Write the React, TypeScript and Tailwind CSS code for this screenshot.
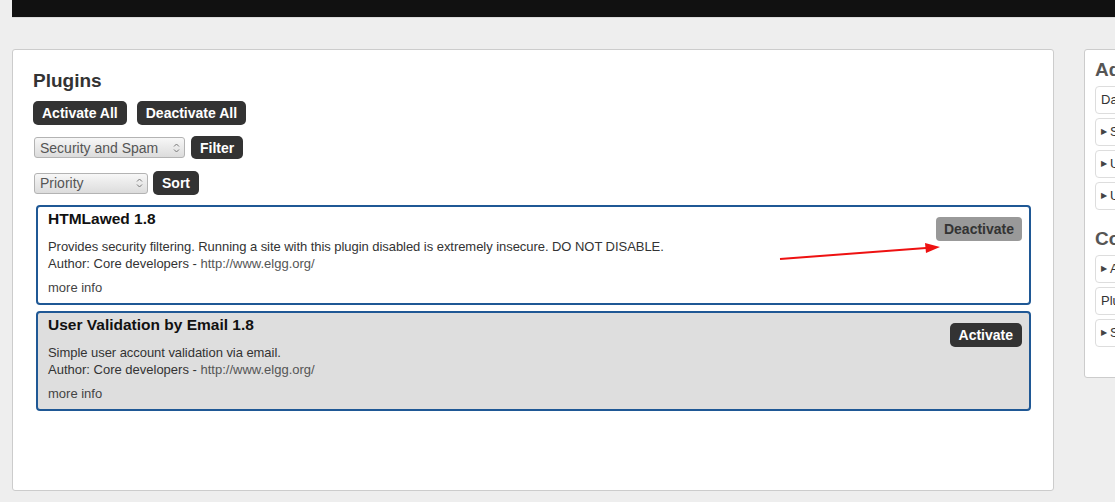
import React from 'react';

interface Plugin {
    name: string;
    description: string;
    active: boolean;
}

const plugins: Plugin[] = [
    {
        name: 'HTMLawed 1.8',
        description: 'Provides security filtering. Running a site with this plugin disabled is extremely insecure. DO NOT DISABLE.',
        active: true,
    },
    {
        name: 'User Validation by Email 1.8',
        description: 'Simple user account validation via email.',
        active: false,
    },
];

const font = { fontFamily: '"Liberation Sans", Arial, sans-serif' };

const DarkButton: React.FC<{ label: string; className?: string }> = ({ label, className }) => (
    <button className={`bg-[#333333] text-white font-bold text-[14px] leading-[16px] rounded-[5px] px-[9px] ${className ?? ''}`}>
        {label}
    </button>
);

const FakeSelect: React.FC<{ value: string; width: string }> = ({ value, width }) => (
    <div className={`${width} h-[21px] flex items-center justify-between border border-[#b3b3b3] rounded-[3px] bg-gradient-to-b from-[#f7f7f7] to-[#dcdcdc] pl-[5px] pr-[4px]`}>
        <span className="text-[14px] text-[#555555] leading-[16px]">{value}</span>
        <svg width="7" height="12" viewBox="0 0 7 12" className="text-[#777777]">
            <path d="M1 4.5 L3.5 2 L6 4.5" fill="none" stroke="currentColor" strokeWidth="1" />
            <path d="M1 7.5 L3.5 10 L6 7.5" fill="none" stroke="currentColor" strokeWidth="1" />
        </svg>
    </div>
);

const SidebarItem: React.FC<{ label: string; arrow?: boolean }> = ({ label, arrow }) => (
    <div className="h-[28px] w-[200px] border border-[#dddddd] rounded-[4px] bg-white flex items-center px-[5px] text-[13px] text-[#333333]">
        {arrow && <span className="text-[8px] mr-[3px] text-[#444444]">▶</span>}
        {label}
    </div>
);

const App: React.FC = () => {
    return (
        <div className="w-[1115px] h-[502px] bg-[#eeeeee] overflow-hidden relative" style={font}>
            {/* Top bar */}
            <div className="ml-[12px] h-[18px] bg-[#111111] border-b border-[#dcdcdc]" />

            <div className="flex items-start gap-[30px] pl-[12px] pt-[31px]">
                {/* Main panel */}
                <div className="w-[1042px] h-[442px] shrink-0 bg-white border border-[#cccccc] rounded-[3px] pt-[20px] pl-[20px] pr-[22px]">
                    <h2 className="text-[19px] leading-[22px] font-bold text-[#333333]">Plugins</h2>

                    <div className="flex gap-[10px] mt-[9px]">
                        <DarkButton label="Activate All" className="h-[24px]" />
                        <DarkButton label="Deactivate All" className="h-[24px]" />
                    </div>

                    <div className="flex items-center gap-[6px] mt-[11px] pl-[1px]">
                        <FakeSelect value="Security and Spam" width="w-[151px]" />
                        <DarkButton label="Filter" className="h-[23px] px-[8px]" />
                    </div>

                    <div className="flex items-center gap-[5px] mt-[12px] pl-[1px]">
                        <FakeSelect value="Priority" width="w-[114px]" />
                        <DarkButton label="Sort" className="h-[24px] px-[7px]" />
                    </div>

                    <div className="mt-[10px] ml-[3px] flex flex-col gap-[6px]">
                        {plugins.map((plugin) => (
                            <div
                                key={plugin.name}
                                className={`flex border-2 border-[#1f5895] rounded-[4px] h-[100px] pl-[10px] pr-[7px] pt-[2px] ${plugin.active ? 'bg-white' : 'bg-[#dedede]'}`}
                            >
                                <div className="flex-1 text-[13px] text-[#333333]">
                                    <div className="text-[15.5px] leading-[19px] font-bold text-[#111111]">{plugin.name}</div>
                                    <p className="mt-[10px] leading-[17px] tracking-[-0.05px]">{plugin.description}</p>
                                    <p className="leading-[17px]">
                                        Author: Core developers - <span className="text-[#555555]">http://www.elgg.org/</span>
                                    </p>
                                    <div className="mt-[7px] leading-[17px] text-[#444444]">more info</div>
                                </div>
                                {plugin.active ? (
                                    <button className="mt-[8px] h-[24px] px-[8px] bg-[#999999] text-[#333333] font-bold text-[14px] rounded-[4px] self-start">
                                        Deactivate
                                    </button>
                                ) : (
                                    <DarkButton label="Activate" className="mt-[8px] h-[24px] px-[7px] self-start" />
                                )}
                            </div>
                        ))}
                    </div>
                </div>

                {/* Sidebar */}
                <div className="w-[222px] h-[329px] shrink-0 bg-white border border-[#cccccc] rounded-[3px] pl-[10px] pt-[9px]">
                    <h3 className="text-[19px] leading-[22px] font-bold text-[#555555]">Administer</h3>
                    <div className="mt-[5px] flex flex-col gap-[4px]">
                        <SidebarItem label="Dashboard" />
                        <SidebarItem label="Statistics" arrow />
                        <SidebarItem label="Users" arrow />
                        <SidebarItem label="Utilities" arrow />
                    </div>
                    <h3 className="mt-[18px] text-[19px] leading-[22px] font-bold text-[#555555]">Configure</h3>
                    <div className="mt-[5px] flex flex-col gap-[4px]">
                        <SidebarItem label="Appearance" arrow />
                        <SidebarItem label="Plugins" />
                        <SidebarItem label="Settings" arrow />
                    </div>
                </div>
            </div>

            {/* Annotation arrow */}
            <svg className="absolute left-0 top-0 pointer-events-none" width="1115" height="502">
                <line x1="780" y1="259" x2="926" y2="248" stroke="#ee1111" strokeWidth="2" />
                <polygon points="940,247 925,243 926,253" fill="#ee1111" />
            </svg>
        </div>
    );
};

export default App;
